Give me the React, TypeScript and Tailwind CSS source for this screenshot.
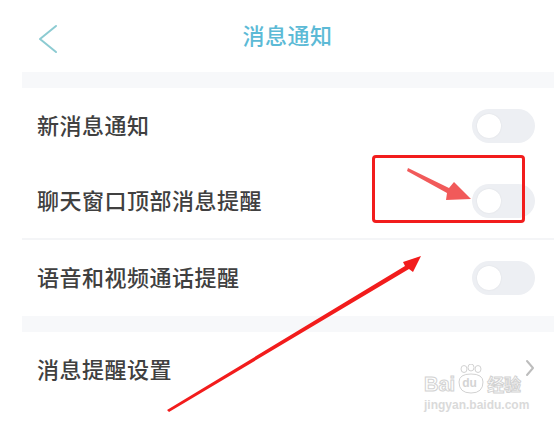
import React from "react";

function Toggle() {
  return (
    <div className="w-[63px] h-[34px] rounded-full bg-[#edeff3] flex items-center pl-[5px]">
      <div className="w-[24px] h-[24px] rounded-full bg-white shadow-[0_0_2px_rgba(0,0,0,0.08)]" />
    </div>
  );
}

function Row({ label, right, h = "h-[76px]" }: { label: string; right: React.ReactNode; h?: string }) {
  return (
    <div className={`${h} flex items-center justify-between pl-[15px] pr-[19px]`}>
      <span className="text-[22px] leading-[26px] pb-[4px] font-medium text-[#404040] tracking-[0.5px]">{label}</span>
      {right}
    </div>
  );
}

export default function App() {
  return (
    <div
      className="relative w-[554px] h-[425px] bg-white overflow-hidden"
      style={{ fontFamily: '"Noto Sans CJK SC", "Noto Sans", sans-serif' }}
    >
      {/* Header */}
      <div className="h-[72px] flex items-center relative">
        <svg className="absolute left-[36px] top-[24px]" width="24" height="30" viewBox="0 0 24 30">
          <polyline points="20,2 4,15 20,28" fill="none" stroke="#8ccbd2" strokeWidth="2" strokeLinecap="round" strokeLinejoin="round" />
        </svg>
        <div className="flex-1 flex justify-center pl-[21px] pb-[4px]">
          <span className="text-[22px] leading-[26px] font-medium text-[#5cbad6] tracking-[0.5px]">消息通知</span>
        </div>
      </div>

      <div className="ml-[22px]">
        <div className="h-[16px] bg-[#f7f8fa]" />
        <Row label="新消息通知" right={<Toggle />} />
        <Row label="聊天窗口顶部消息提醒" right={<Toggle />} h="h-[74px]" />
        <div className="h-[2px] bg-[#f4f5f7]" />
        <Row label="语音和视频通话提醒" right={<Toggle />} h="h-[76px]" />
        <div className="h-[16px] bg-[#f7f8fa]" />
        <div className="h-[76px] flex items-center justify-between pl-[15px] pr-[19px]">
          <span className="text-[22px] leading-[26px] pb-[4px] font-medium text-[#404040] tracking-[0.5px]">消息提醒设置</span>
          <svg width="10" height="18" viewBox="0 0 10 18" className="mb-[4px]">
            <polyline points="2,2 8,9 2,16" fill="none" stroke="#bdbdbd" strokeWidth="2" strokeLinecap="round" strokeLinejoin="round" />
          </svg>
        </div>
      </div>

      {/* Red highlight box */}
      <div className="absolute left-[372px] top-[155px] w-[153px] h-[68px] border-[3px] border-[#f21d1d] rounded-[4px]" />

      {/* Annotation arrows */}
      <svg className="absolute left-0 top-0" width="554" height="425" viewBox="0 0 554 425">
        <polygon
          points="408,168 449,188 454,182 471,199 446,200 447,193 407,171"
          fill="#ef4848"
          opacity="0.9"
        />
        <polygon points="167,410 405,266 403,262 421,256 413,272 409,269 169,412" fill="#f21c1c" />
      </svg>

      {/* Baidu watermark */}
      <div className="absolute left-[424px] top-[364px] flex flex-col items-start select-none">
        <div className="flex items-end">
          <span
            className="text-[20px] leading-[20px] font-bold text-white [-webkit-text-stroke:1px_#d2d2d2]"
            style={{ fontFamily: '"Liberation Sans", Arial, sans-serif' }}
          >
            Bai
          </span>
          <div className="relative w-[30px] h-[30px] ml-[1px]">
            <svg className="absolute left-0 top-0" width="30" height="30" viewBox="0 0 30 30">
              <ellipse cx="8" cy="5" rx="3" ry="3.5" fill="none" stroke="#d2d2d2" />
              <ellipse cx="15" cy="3.5" rx="3" ry="3.5" fill="none" stroke="#d2d2d2" />
              <ellipse cx="22" cy="5" rx="3" ry="3.5" fill="none" stroke="#d2d2d2" />
              <path d="M3 18 Q3 10 15 10 Q27 10 27 18 Q27 29 15 29 Q3 29 3 18 Z" fill="none" stroke="#d2d2d2" />
            </svg>
            <span
              className="absolute left-[6px] top-[13px] text-[12px] leading-[12px] font-bold text-[#d4d4d4]"
              style={{ fontFamily: '"Liberation Sans", Arial, sans-serif' }}
            >
              du
            </span>
          </div>
          <span className="text-[17px] leading-[20px] font-bold text-white [-webkit-text-stroke:1px_#d2d2d2] ml-[1px]">经验</span>
        </div>
        <span
          className="text-[12px] leading-[14px] mt-[4px] text-[#dadada] font-bold"
          style={{ fontFamily: '"Liberation Sans", Arial, sans-serif' }}
        >
          jingyan.baidu.com
        </span>
      </div>
    </div>
  );
}
